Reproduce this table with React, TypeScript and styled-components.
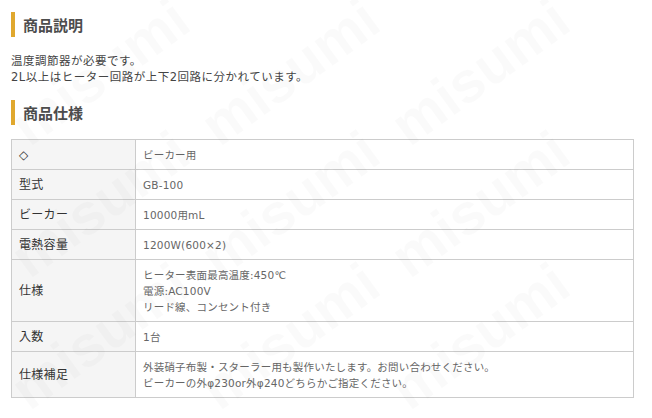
import React from 'react';
import styled, {createGlobalStyle} from 'styled-components';

const GlobalStyle = createGlobalStyle`
  html, body {
    margin: 0;
    padding: 0;
    background: #fff;
  }
  body {
    font-family: "DejaVu Sans", "Noto Sans CJK JP", sans-serif;
    color: #444;
  }
`;

interface Spec {
  label: string,
  value: string[]
}

const specs: Spec[] = [
  {label: '◇', value: ['ビーカー用']},
  {label: '型式', value: ['GB-100']},
  {label: 'ビーカー', value: ['10000用mL']},
  {label: '電熱容量', value: ['1200W(600×2)']},
  {label: '仕様', value: ['ヒーター表面最高温度:450℃', '電源:AC100V', 'リード線、コンセント付き']},
  {label: '入数', value: ['1台']},
  {label: '仕様補足', value: ['外装硝子布製・スターラー用も製作いたします。お問い合わせください。', 'ビーカーの外φ230or外φ240どちらかご指定ください。']}
];

// watermark centers, one grid of "misumi" stamped over the page
const marks: Array<{x: number, y: number}> = [];
[72, 204, 336].forEach(y => {
  [100, 290, 480].forEach(x => marks.push({x, y}));
});

const App: React.FC = () => (
  <Page>
    <GlobalStyle/>
    <Heading>商品説明</Heading>
    <Description>
      温度調節器が必要です。<br/>
      2L以上はヒーター回路が上下2回路に分かれています。
    </Description>
    <Heading>商品仕様</Heading>
    <SpecTable>
      <colgroup>
        <col style={{width: 124}}/>
        <col/>
      </colgroup>
      <tbody>
        {specs.map(item => (
          <tr key={item.label}>
            <Label>{item.label}</Label>
            <Value>
              {item.value.map(line => <Line key={line}>{line}</Line>)}
            </Value>
          </tr>
        ))}
      </tbody>
    </SpecTable>
    <Watermarks aria-hidden="true">
      {marks.map((m, i) => (
        <Mark key={i} style={{left: m.x, top: m.y}}>misumi</Mark>
      ))}
    </Watermarks>
  </Page>
);

const Page = styled.div`
  position: relative;
  width: 652px;
  height: 418px;
  overflow: hidden;
  box-sizing: border-box;
  padding: 12px 18px 0 11px;
`;
const Heading = styled.h2`
  margin: 0;
  height: 25px;
  line-height: 25px;
  border-left: 4px solid #e0a82e;
  padding-left: 8px;
  font-family: "Noto Sans CJK JP", sans-serif;
  font-size: 15px;
  font-weight: 700;
  color: #4d4d4d;
`;
const Description = styled.p`
  margin: 16px 0 15px;
  font-size: 11.5px;
  line-height: 16px;
  letter-spacing: 0.5px;
  color: #444;
`;
const SpecTable = styled.table`
  margin-top: 14px;
  width: 623px;
  border-collapse: collapse;
  table-layout: fixed;
`;
const Label = styled.td`
  border: 1px solid #ccc;
  background: #f5f5f5;
  padding: 6.5px 7px;
  font-size: 12px;
  line-height: 16px;
  letter-spacing: 0.3px;
  color: #333;
  vertical-align: middle;
`;
const Value = styled.td`
  border: 1px solid #ccc;
  background: #fff;
  padding: 6.5px 7px;
  font-size: 10.5px;
  line-height: 16px;
  letter-spacing: 0.2px;
  color: #666;
  vertical-align: middle;
`;
const Line = styled.div`
  white-space: nowrap;
`;
const Watermarks = styled.div`
  position: absolute;
  inset: 0;
  pointer-events: none;
`;
const Mark = styled.span`
  position: absolute;
  transform: translate(-50%, -50%) rotate(-36deg);
  font-family: "Liberation Sans", sans-serif;
  font-weight: 700;
  font-size: 58px;
  line-height: 1;
  color: rgba(0, 0, 0, 0.02);
  white-space: nowrap;
`;

export default App;
